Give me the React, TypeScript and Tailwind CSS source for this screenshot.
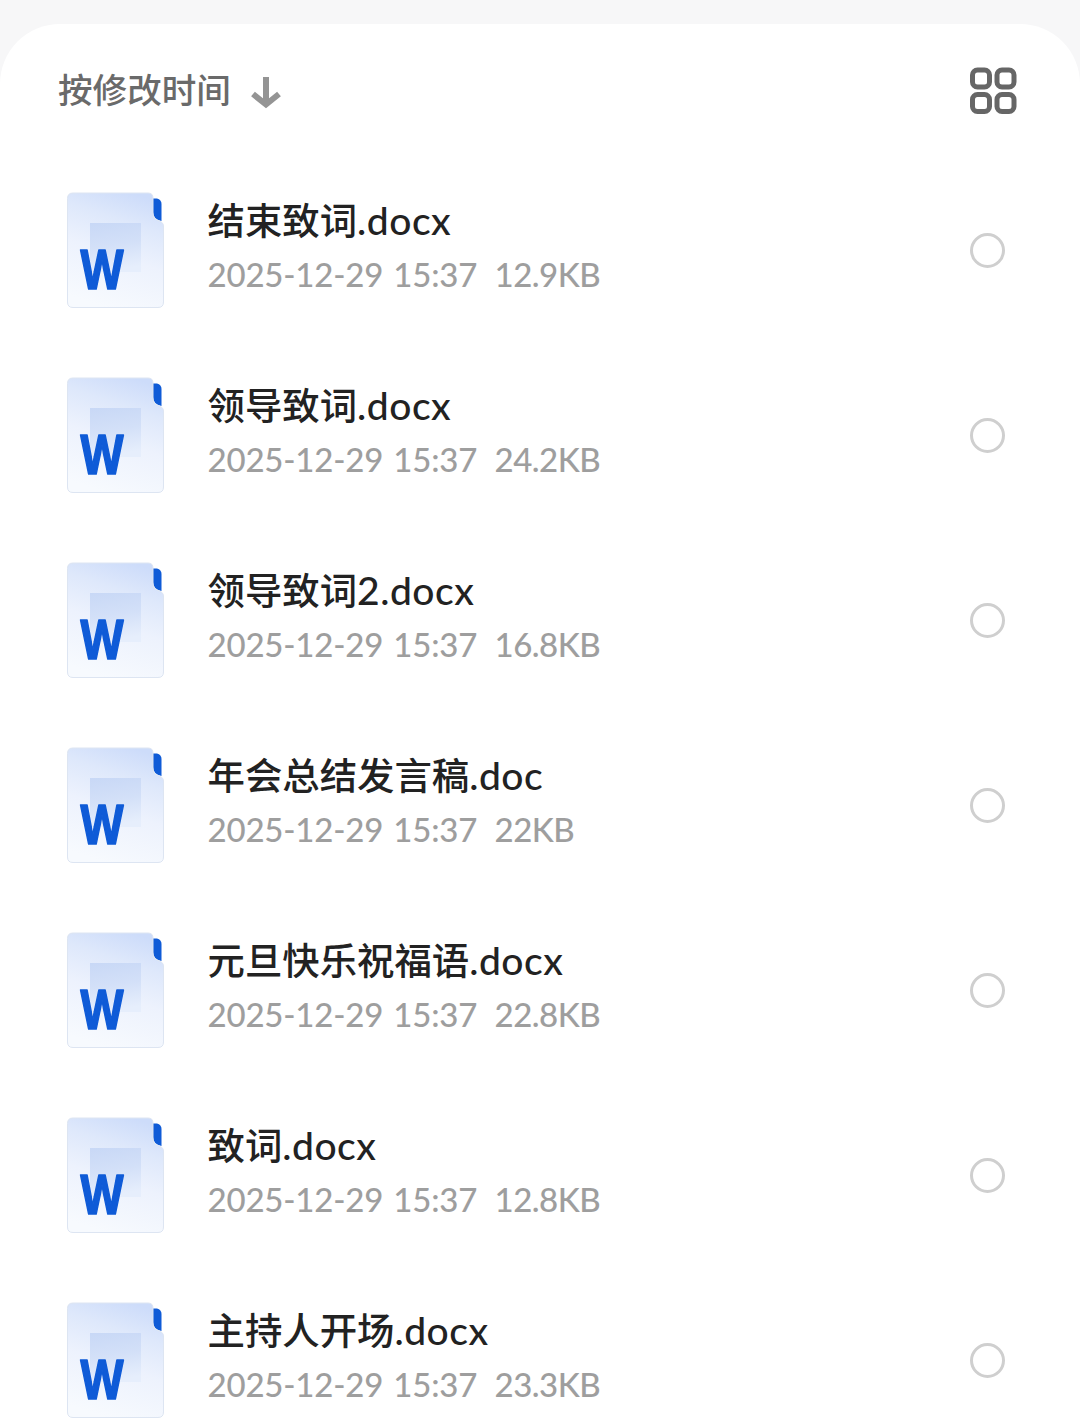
import { useId } from 'react'

type FileItem = {
  stem: string
  latin: string
  date: string
  size: string
}

const files: FileItem[] = [
  { stem: '结束致词', latin: '.docx', date: '2025-12-29 15:37', size: '12.9KB' },
  { stem: '领导致词', latin: '.docx', date: '2025-12-29 15:37', size: '24.2KB' },
  { stem: '领导致词', latin: '2.docx', date: '2025-12-29 15:37', size: '16.8KB' },
  { stem: '年会总结发言稿', latin: '.doc', date: '2025-12-29 15:37', size: '22KB' },
  { stem: '元旦快乐祝福语', latin: '.docx', date: '2025-12-29 15:37', size: '22.8KB' },
  { stem: '致词', latin: '.docx', date: '2025-12-29 15:37', size: '12.8KB' },
  { stem: '主持人开场', latin: '.docx', date: '2025-12-29 15:37', size: '23.3KB' },
]

const WordIcon = () => {
  const id = useId()

  return (
    <svg className="h-[116px] w-[98px] shrink-0" viewBox="0 0 98 116">
      <defs>
        <linearGradient id={`${id}page`} x1="0.68" y1="0" x2="0.4" y2="1">
          <stop offset="0" stopColor="#cddcfa" />
          <stop offset="0.25" stopColor="#dee8fb" />
          <stop offset="0.55" stopColor="#edf2fd" />
          <stop offset="1" stopColor="#f7fafe" />
        </linearGradient>
        <linearGradient id={`${id}block`} x1="0" y1="0" x2="0.15" y2="1">
          <stop offset="0" stopColor="#c8d8f6" />
          <stop offset="0.5" stopColor="#d3e0f8" />
          <stop offset="1" stopColor="#e6eefc" />
        </linearGradient>
      </defs>
      <path d="M87 6.500H91Q95.500 7.500 95.500 12V29Q87 27 87 20Z" fill="#0f5bd7" />
      <path
        d="M7 1H82Q87 1 87 6V21Q87 27 92 28.500Q97.500 30 97.500 34V110Q97.500 115.500 92 115.500H7Q1.500 115.500 1.500 110V6.500Q1.500 1 7 1Z"
        fill={`url(#${id}page)`}
        stroke="#dde5f2"
        strokeWidth="1"
      />
      <rect x="24" y="31" width="51" height="49" fill={`url(#${id}block)`} />
      <text
        x="14.500"
        y="96.500"
        fontFamily="Noto Sans, sans-serif"
        fontWeight="700"
        fontSize="53"
        textLength="43"
        lengthAdjust="spacingAndGlyphs"
        fill="#0f5bd7"
        stroke="#0f5bd7"
        strokeWidth="1.600"
        strokeLinejoin="round"
      >
        W
      </text>
    </svg>
  )
}

const FileRow = ({ file }: { file: FileItem }) => {
  return (
    <li className="flex h-[185px] items-center pr-[75px] pl-[66px]">
      <WordIcon />
      <div className="ml-[43.500px] flex-1 pb-[5px] whitespace-nowrap">
        <p className="flex h-[55px] items-baseline text-[37.4px] leading-[55px] font-medium text-[#222222]">
          <span>{file.stem}</span>
          <span className="text-[39px] tracking-[0.500px]">{file.latin}</span>
        </p>
        <p className="flex h-[54px] items-center gap-[18px] text-[33px] font-medium text-[#9e9e9e]">
          <span className="w-[269px] tracking-[-0.200px] [word-spacing:2px]">{file.date}</span>
          <span className="tracking-[-0.500px]">{file.size}</span>
        </p>
      </div>
      <button aria-label="选择" className="size-[35px] rounded-full border-[3.500px] border-[#cfcfcf]" />
    </li>
  )
}

const App = () => {
  return (
    <div className="h-[1425px] w-[1080px] overflow-hidden bg-[#f7f7f8] pt-6 font-[Lato,'Noto_Sans_CJK_SC',sans-serif]">
      <main className="rounded-t-[60px] bg-white">
        <header className="flex h-[133.500px] items-center justify-between pr-[63px] pl-[58px]">
          <button className="flex items-center gap-5 text-[34.600px] font-medium text-[#6a6a6a]">
            <span className="pb-[2px]">按修改时间</span>
            <svg className="mt-[4px] h-8 w-[30px]" viewBox="0 0 30 32" fill="none" stroke="#949494" strokeWidth="6">
              <path d="M15 0V27M2 17L15 27.500L28 17" />
            </svg>
          </button>
          <button aria-label="宫格视图">
            <svg className="size-[47px]" viewBox="0 0 47 47" fill="none" stroke="#666666" strokeWidth="5">
              <rect x="2.500" y="3" width="17" height="17" rx="5" />
              <rect x="27" y="3" width="17" height="17" rx="5" />
              <rect x="2.500" y="27.500" width="17" height="17" rx="5" />
              <rect x="27" y="27.500" width="17" height="17" rx="5" />
            </svg>
          </button>
        </header>
        <ul>
          {files.map((file) => (
            <FileRow key={file.stem + file.latin} file={file} />
          ))}
        </ul>
      </main>
    </div>
  )
}

export default App
